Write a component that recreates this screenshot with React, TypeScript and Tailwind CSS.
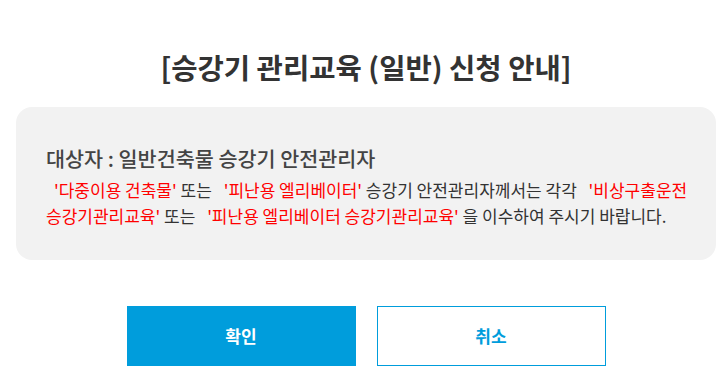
export default function App() {
  return (
    <div className="min-h-screen bg-white pl-4 pr-[6px] font-['Noto_Sans_CJK_KR','Noto_Sans',sans-serif] text-[#333]">
      <h1 className="pt-[45px] text-center text-[28.6px] font-bold leading-[44px] text-[#333]">
        [승강기 관리교육 (일반) 신청 안내]
      </h1>
      <div className="mt-[18px] rounded-2xl bg-[#f2f2f2] pl-[30px] pr-[20px] pt-[38px] pb-[31px]">
        <p className="text-[20.7px] font-medium leading-[26px] text-[#444]">대상자 : 일반건축물 승강기 안전관리자</p>
        <p className="mt-[6px] break-keep text-[17px] leading-[26px] text-[#333]">
          <span className="pl-2 text-[#ff0000]">'다중이용 건축물'</span> 또는 <span className="pl-2 text-[#ff0000]">'피난용 엘리베이터'</span> 승강기 안전관리자께서는 각각 <span className="pl-2 text-[#ff0000]">'비상구출운전 승강기관리교육'</span> 또는 <span className="pl-2 text-[#ff0000]">'피난용 엘리베이터 승강기관리교육'</span> 을 이수하여 주시기 바랍니다.
        </p>
      </div>
      <div className="mt-[46px] flex justify-center gap-[21px]">
        <button className="h-[60px] w-[229px] bg-[#009ddc] text-[17px] font-bold text-white">확인</button>
        <button className="h-[60px] w-[229px] border border-[#009ddc] bg-white text-[17px] font-bold text-[#009ddc]">취소</button>
      </div>
    </div>
  );
}
